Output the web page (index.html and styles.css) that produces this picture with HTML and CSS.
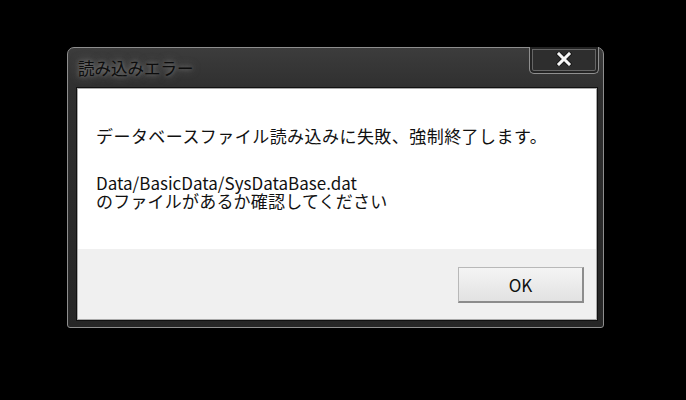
FILE: index.html
```html
<!DOCTYPE html>
<html lang="ja">
<head>
<meta charset="utf-8">
<link rel="stylesheet" href="styles.css">
</head>
<body>
<div class="window">
  <div class="titlebar">
    <span class="title">読み込みエラー</span>
    <div class="close">
      <svg class="x" width="16" height="14" viewBox="0 0 16 14">
        <path d="M3 2 L13 12 M13 2 L3 12" stroke="#1a1a1a" stroke-width="5" stroke-linecap="square"/>
        <path d="M3 2 L13 12 M13 2 L3 12" stroke="#f6f6f6" stroke-width="3" stroke-linecap="square"/>
      </svg>
    </div>
  </div>
  <div class="client">
    <div class="message">
      <p class="line main">データベースファイル読み込みに失敗、強制終了します。</p>
      <p class="line path">Data/BasicData/SysDataBase.dat</p>
      <p class="line jp">のファイルがあるか確認してください</p>
    </div>
    <div class="footer">
      <button class="ok">OK</button>
    </div>
  </div>
</div>
</body>
</html>
```
FILE: styles.css
```css
html, body {
  margin: 0;
  padding: 0;
  background: #000;
  width: 686px;
  height: 400px;
  overflow: hidden;
}
body {
  padding: 47px 0 0 67px;
  box-sizing: border-box;
  font-family: "Noto Sans CJK JP", "Noto Sans", sans-serif;
}
.window {
  width: 537px;
  height: 281px;
  box-sizing: border-box;
  border: 1px solid #8e8e8e;
  border-radius: 7px 7px 3px 3px;
  background: linear-gradient(180deg, #3c3c3c 0%, #2f2f2f 15%, #262626 100%);
  padding: 0 6px 7px 9px;
  display: flex;
  flex-direction: column;
}
.titlebar {
  height: 40px;
  display: flex;
  justify-content: space-between;
  align-items: center;
  padding-left: 1px;
  margin-right: -2px;
}
.title {
  font-size: 16.5px;
  line-height: 1;
  color: #0c0c0c;
  text-shadow: 0 0 10px rgba(200,200,200,0.5), 0 0 4px rgba(170,170,170,0.55);
}
.close {
  align-self: flex-start;
  width: 70px;
  height: 27px;
  margin-top: -1px;
  box-sizing: border-box;
  border: 1px solid #8f8f8f;
  border-top: none;
  border-radius: 0 0 5px 5px;
  box-shadow: inset 0 0 0 2px #242424, inset 0 0 0 3px #666;
  background: #2e2e2e;
  display: flex;
  align-items: center;
  justify-content: center;
}
.x {
  display: block;
  margin-top: -2px;
}
.client {
  height: 232px;
  box-sizing: border-box;
  border: 1px solid #a9a9a9;
  box-shadow: 0 0 0 1px #111;
  background: #fff;
  display: flex;
  flex-direction: column;
}
.message {
  height: 160px;
  box-sizing: border-box;
  padding: 38px 0 0 18px;
  color: #111;
}
.line {
  margin: 0;
  font-size: 17px;
  line-height: 17px;
  white-space: nowrap;
}
.main {
  margin-bottom: 30px;
  letter-spacing: 0.45px;
}
.path {
  line-height: 18px;
}
.jp {
  line-height: 18px;
  letter-spacing: 0.2px;
}
.footer {
  flex: 1;
  background: #f0f0f0;
  display: flex;
  justify-content: flex-end;
  align-items: flex-start;
  padding: 18px 12px 0 0;
}
.ok {
  width: 126px;
  height: 36px;
  box-sizing: border-box;
  border: 1px solid #b8b8b8;
  border-right: 2px solid #8c8c8c;
  border-bottom: 2px solid #8c8c8c;
  background: linear-gradient(180deg, #f4f4f4 0%, #ebebeb 50%, #e2e2e2 100%);
  font-family: "Noto Sans CJK JP", "Noto Sans", sans-serif;
  font-size: 17px;
  color: #111;
  padding: 0;
}
```
